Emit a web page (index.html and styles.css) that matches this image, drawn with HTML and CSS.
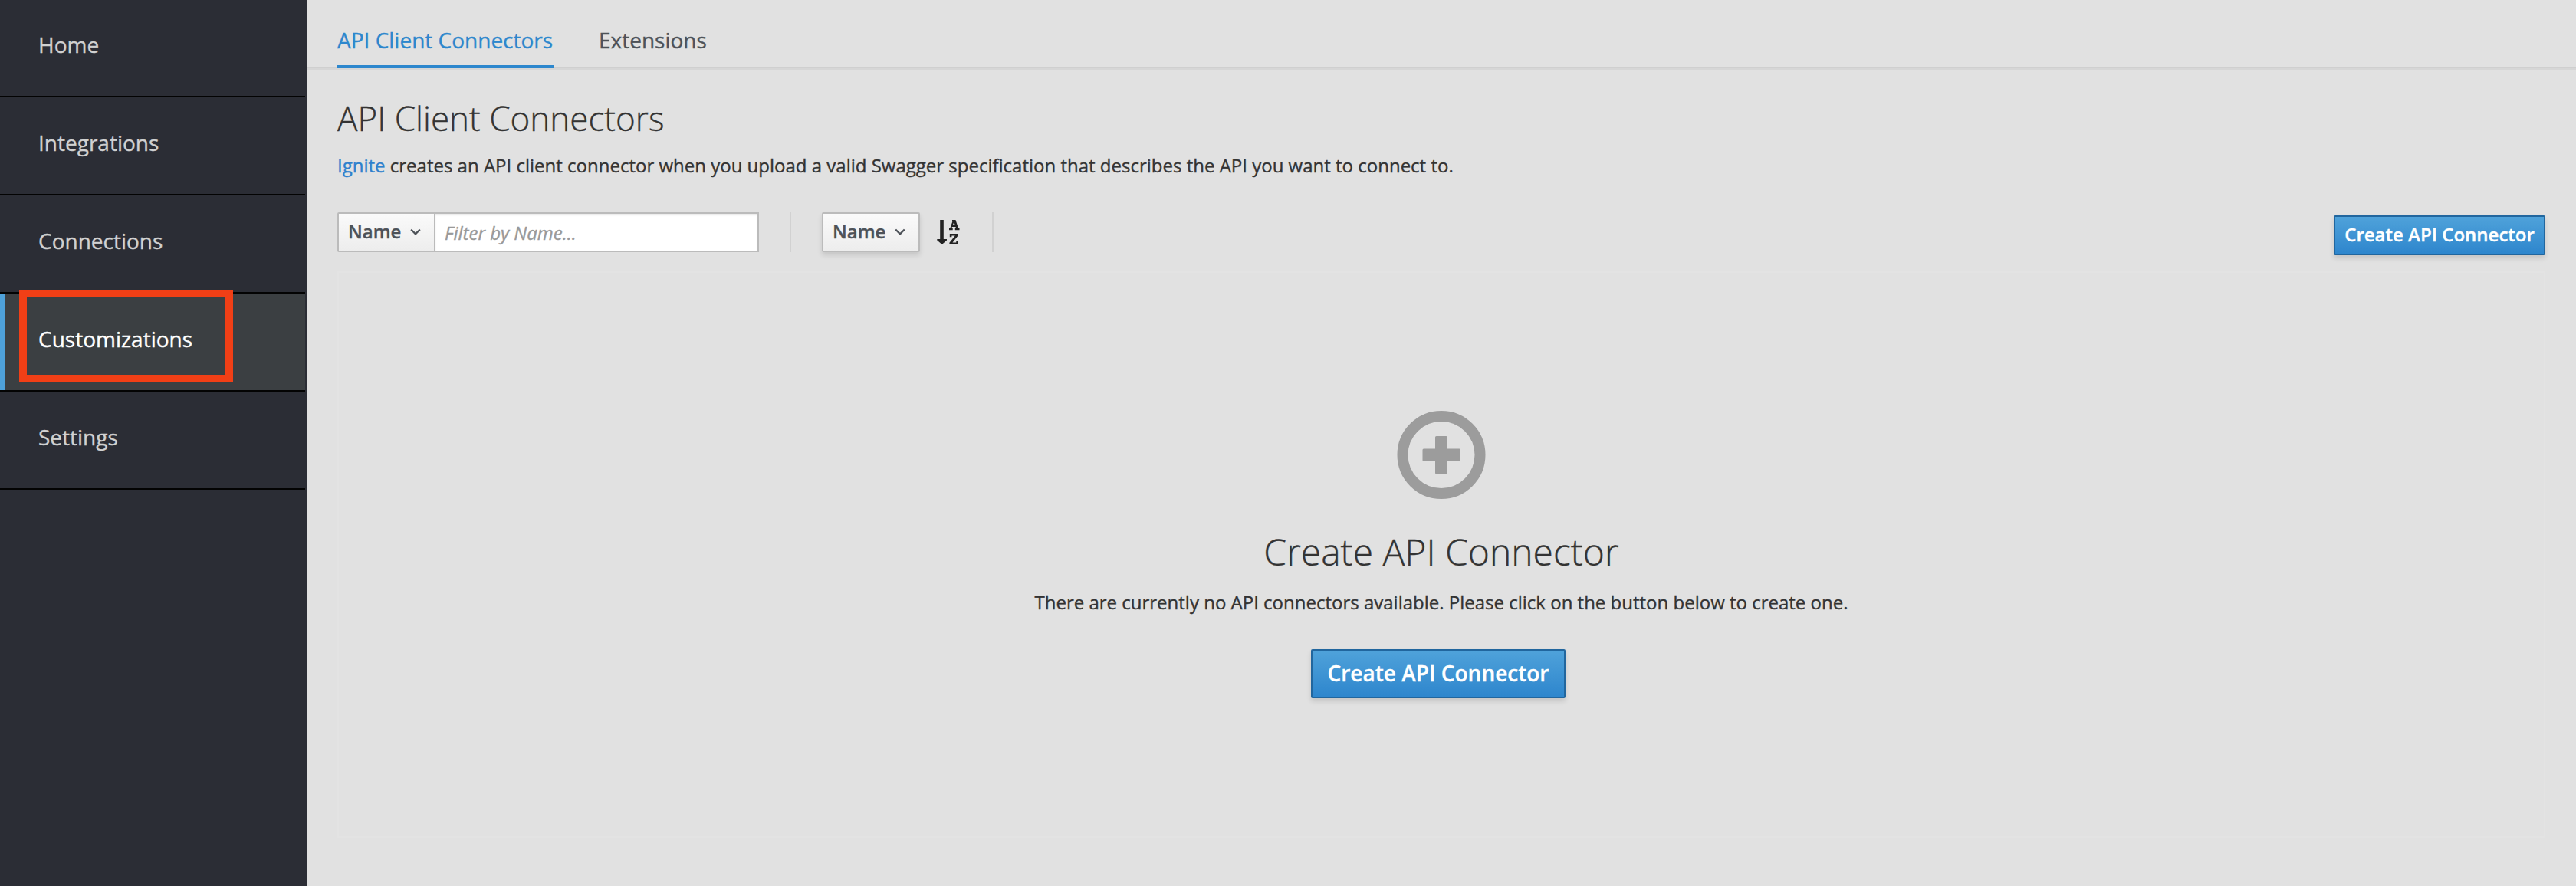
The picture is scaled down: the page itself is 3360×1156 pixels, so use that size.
FILE: index.html
```html
<!DOCTYPE html>
<html lang="en">
<head>
<meta charset="utf-8">
<title>API Client Connectors</title>
<link rel="stylesheet" href="styles.css">
</head>
<body>
<div class="app">
  <nav class="sidebar">
    <a class="nav-item">Home</a>
    <a class="nav-item">Integrations</a>
    <a class="nav-item">Connections</a>
    <a class="nav-item active">Customizations<span class="highlight"></span></a>
    <a class="nav-item">Settings</a>
  </nav>
  <main class="content">
    <div class="tabs">
      <a class="tab current">API Client Connectors</a>
      <a class="tab">Extensions</a>
    </div>
    <section class="page">
      <h1 class="title">API Client Connectors</h1>
      <p class="intro"><a class="link">Ignite</a> creates an API client connector when you upload a valid Swagger specification that describes the API you want to connect to.</p>
      <div class="toolbar">
        <div class="filter">
          <button class="btn select joined">Name<svg class="chevron" width="14" height="10" viewBox="0 0 14 10"><path d="M1.2 1.5 7 7.3l5.8-5.8"/></svg></button>
          <input class="field" type="text" placeholder="Filter by Name...">
        </div>
        <span class="rule"></span>
        <button class="btn select raised">Name<svg class="chevron" width="14" height="10" viewBox="0 0 14 10"><path d="M1.2 1.5 7 7.3l5.8-5.8"/></svg></button>
        <svg class="sort" width="30" height="34" viewBox="0 0 30 34">
          <path d="M4.2 1h4.600v25H13v1.400L6.700 33 .3 27.400V26h3.900z"/>
          <path fill-rule="evenodd" d="M20 1h4.500l3.600 11H29.500v2.200h-5.700V12h1.300l-.6-2h-4.600l-.7 2h1.500v2.200H16V12h1.200l3.100-8.800H20zM20.700 7.900h3.100L22.400 3.500z"/>
          <path d="M16.800 19h11v2.200l-7.300 9.300h4.800v-2h2.700V33H16.400v-2.200l7.400-9.400h-4.400v1.900h-2.600z"/>
        </svg>
        <span class="rule last"></span>
        <button class="btn primary create">Create API Connector</button>
      </div>
      <div class="empty">
        <svg class="plus" width="116" height="116" viewBox="0 0.5 116 116">
          <circle cx="58" cy="58" r="50.500"/>
          <path d="M51.500 33.500h13q1.500 0 1.500 1.500v15h15.500q1.500 0 1.500 1.500v13.500q0 1.500-1.500 1.500H66v15q0 1.500-1.500 1.500h-13q-1.500 0-1.500-1.500v-15H35q-1.500 0-1.500-1.500V51.500q0-1.500 1.500-1.500h15V35q0-1.500 1.500-1.500z"/>
        </svg>
        <h2 class="empty-title">Create API Connector</h2>
        <p class="empty-text">There are currently no API connectors available. Please click on the button below to create one.</p>
        <button class="btn primary large">Create API Connector</button>
      </div>
    </section>
  </main>
</div>
</body>
</html>
```
FILE: styles.css
```css
* { box-sizing: border-box; }
body {
  margin: 0;
  background: #e1e1e1;
  color: #333;
  font: 24px/40px "Open Sans", sans-serif;
  -webkit-text-stroke: .35px currentColor;
}
.app { display: flex; height: 1156px; overflow: hidden; }

.sidebar {
  flex: 0 0 400px;
  padding-right: 2px;
  background: #2b2d35;
}
.nav-item {
  position: relative;
  display: flex;
  height: 128px;
  padding: 39px 0 0 50px;
  border-bottom: 2px solid #030303;
  color: #d1d1d1;
  font-size: 28px;
}
.nav-item:first-child { height: 127px; padding-top: 38px; }
.nav-item.active {
  background: #3b3f42;
  box-shadow: inset 6px 0 #4ea1d9;
  color: #fff;
}
.highlight {
  position: absolute;
  left: 25px;
  top: -5px;
  width: 279px;
  height: 121px;
  border: 10px solid #f13f16;
}

.content { flex: 1; min-width: 0; }
.tabs {
  display: flex;
  gap: 59px;
  height: 91px;
  padding: 32px 40px 0;
  background: linear-gradient(#cfcfcf, #cfcfcf) 0 87px / 100% 2px no-repeat, linear-gradient(#d6d6d6, #d6d6d6) 0 89px / 100% 2px no-repeat;
}
.tab { height: 57px; color: #4d5258; font-size: 28px; }
.tab.current { width: 282px; border-bottom: 4px solid #2d87cd; color: #2d87cd; white-space: nowrap; }

.page { display: flex; flex-direction: column; padding: 0 40px; }
.title {
  margin: 33px 0 0;
  font-size: 44px;
  font-weight: 300;
  line-height: 60px;
}
.intro { margin: 12px 0 0; }
.link { color: #2d80cd; }

.toolbar { display: flex; height: 56px; margin-top: 41px; }
.filter { display: flex; width: 550px; height: 52px; }
.btn {
  display: flex;
  height: 52px;
  margin: 0;
  border: 2px solid #bbb;
  border-radius: 2px;
  font: 600 24px/44px "Open Sans", sans-serif;
  white-space: nowrap;
  -webkit-text-stroke: .35px currentColor;
}
.select {
  width: 128px;
  padding: 1px 0 0 12px;
  background: linear-gradient(#fafafa, #ededed);
  color: #4d5258;
}
.joined { border-radius: 2px 0 0 2px; }
.raised { margin-left: 40px; box-shadow: 0 4px 6px rgba(3, 3, 3, .12); }
.chevron { margin: 18px 0 0 12px; fill: none; stroke: currentColor; stroke-width: 2.4; }
.field {
  flex: 1;
  min-width: 0;
  padding: 0 12px;
  border: 2px solid #bbb;
  border-left: 0;
  border-radius: 0;
  background: #fff;
  box-shadow: inset 0 2px 2px rgba(3, 3, 3, .075);
  font: 24px "Open Sans", sans-serif;
}
.field::placeholder { color: #999; font-style: italic; opacity: 1; }
.rule { width: 2px; height: 52px; margin-left: 40px; background: #d1d1d1; }
.rule.last { margin-left: 42px; }
.sort { margin: 9px 0 0 22px; fill: #222; }
.primary {
  justify-content: center;
  padding: 0;
  border-color: #21669e;
  background: linear-gradient(#4fa2da, #2e86cd);
  box-shadow: 0 4px 6px rgba(3, 3, 3, .12);
  color: #fff;
}
.create { width: 276px; margin: 4px 0 0 auto; padding-top: 1px; }

.empty {
  display: flex;
  flex-direction: column;
  align-items: center;
  height: 739px;
  margin-top: 21px;
  padding-top: 180px;
  border: 2px solid #e3e3e3;
}
.plus { fill: #9c9c9c; }
.plus circle { fill: none; stroke: #9c9c9c; stroke-width: 14; }
.empty-title {
  margin: 35px 0 0;
  font-size: 48px;
  font-weight: 300;
  line-height: 66px;
}
.empty-text { margin: 13px 0 0; }
.large {
  width: 332px;
  height: 64px;
  margin: 41px 8px 0 0;
  padding-top: 7px;
  font-size: 28px;
}
```
